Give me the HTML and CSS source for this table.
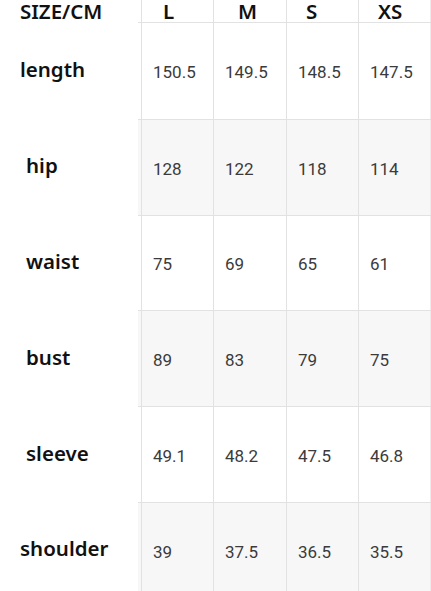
FILE: index.html
```html
<!DOCTYPE html>
<html>
<head>
<meta charset="utf-8">
<link rel="stylesheet" href="styles.css">
</head>
<body>
<div class="chart">
  <div class="row head">
    <div class="label label--wide">SIZE/CM</div>
    <div class="cells">
      <div class="cell hcell hl">L</div>
      <div class="cell hcell hm">M</div>
      <div class="cell hcell hs">S</div>
      <div class="cell hcell hxs">XS</div>
      <div class="edge"></div>
    </div>
  </div>
  <div class="row">
    <div class="label label--wide">length</div>
    <div class="cells">
      <div class="cell">150.5</div><div class="cell">149.5</div><div class="cell">148.5</div><div class="cell">147.5</div><div class="edge"></div>
    </div>
  </div>
  <div class="row alt">
    <div class="label">hip</div>
    <div class="cells">
      <div class="cell">128</div><div class="cell">122</div><div class="cell">118</div><div class="cell">114</div><div class="edge"></div>
    </div>
  </div>
  <div class="row">
    <div class="label">waist</div>
    <div class="cells">
      <div class="cell">75</div><div class="cell">69</div><div class="cell">65</div><div class="cell">61</div><div class="edge"></div>
    </div>
  </div>
  <div class="row alt">
    <div class="label">bust</div>
    <div class="cells">
      <div class="cell">89</div><div class="cell">83</div><div class="cell">79</div><div class="cell">75</div><div class="edge"></div>
    </div>
  </div>
  <div class="row">
    <div class="label">sleeve</div>
    <div class="cells">
      <div class="cell">49.1</div><div class="cell">48.2</div><div class="cell">47.5</div><div class="cell">46.8</div><div class="edge"></div>
    </div>
  </div>
  <div class="row alt">
    <div class="label label--wide">shoulder</div>
    <div class="cells">
      <div class="cell">39</div><div class="cell">37.5</div><div class="cell">36.5</div><div class="cell">35.5</div><div class="edge"></div>
    </div>
  </div>
</div>
</body>
</html>
```

FILE: styles.css
```css
html, body {
  margin: 0;
  padding: 0;
  background: #ffffff;
}
body {
  width: 431px;
  height: 591px;
  overflow: hidden;
}
.chart {
  display: flex;
  flex-direction: column;
}
.row {
  display: flex;
  height: 95.8px;
}
.row.head {
  height: 23px;
}
.label {
  width: 138px;
  flex: 0 0 138px;
  box-sizing: border-box;
  padding-left: 26px;
  padding-bottom: 3px;
  display: flex;
  align-items: center;
  font-family: "Noto Sans", "Open Sans", sans-serif;
  font-weight: 600;
  font-size: 20.5px;
  color: #111111;
  background: #ffffff;
}
.label--wide {
  padding-left: 20px;
}
.head .label {
  align-items: flex-start;
  padding-bottom: 0;
  line-height: 23px;
}
.cells {
  flex: 1;
  display: grid;
  grid-template-columns: 72px 73px 72px 72px 1px;
  padding-left: 3px;
  border-top: 1px solid #e2e2e2;
  box-sizing: border-box;
}
.head .cells {
  border-top: none;
  border-bottom: 1px solid #e2e2e2;
}
.row.head + .row .cells {
  border-top: none;
}
.alt .cells {
  background: #f7f7f7;
}
.cell {
  box-sizing: border-box;
  border-left: 1px solid #e2e2e2;
  padding-left: 11px;
  display: flex;
  align-items: center;
  padding-top: 3px;
  font-family: Roboto, "Liberation Sans", sans-serif;
  font-size: 17px;
  color: #3b3b3b;
}
.edge {
  background: #ececec;
}
.hcell {
  align-items: flex-start;
  padding-top: 0;
  font-family: "Noto Sans", "Open Sans", sans-serif;
  font-weight: 600;
  font-size: 20.5px;
  line-height: 22px;
  color: #111111;
}
.hl { padding-left: 21px; }
.hm { padding-left: 24px; }
.hs { padding-left: 19px; }
.hxs { padding-left: 19px; }
```
